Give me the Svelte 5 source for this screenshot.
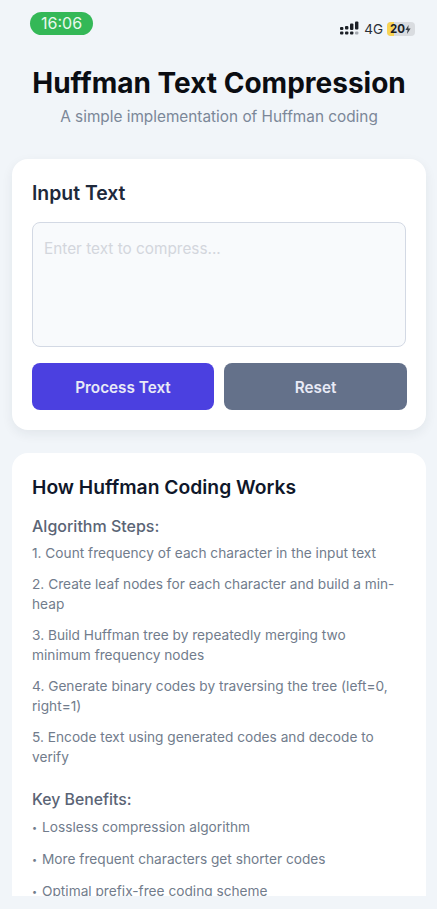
<script>
  const steps = [
    'Count frequency of each character in the input text',
    'Create leaf nodes for each character and build a min-heap',
    'Build Huffman tree by repeatedly merging two minimum frequency nodes',
    'Generate binary codes by traversing the tree (left=0, right=1)',
    'Encode text using generated codes and decode to verify'
  ];
  const benefits = [
    'Lossless compression algorithm',
    'More frequent characters get shorter codes',
    'Optimal prefix-free coding scheme'
  ];
</script>

<div class="screen">
  <div class="status">
    <span class="time">16:06</span>
    <div class="indicators">
      <svg class="signal" width="20" height="14" viewBox="0 0 20 14" aria-hidden="true">
        <g fill="#1b1f26">
          <rect x="0" y="6" width="3.4" height="3" rx="1"/><rect x="5" y="5" width="3.4" height="3.6" rx="1"/>
          <rect x="10" y="2.5" width="3.4" height="6.5" rx="1"/><rect x="15" y="0.5" width="3.4" height="8" rx="1"/>
          <rect x="0" y="10.5" width="3.4" height="3" rx="1"/><rect x="5" y="10.5" width="3.4" height="3" rx="1"/>
          <rect x="10" y="10.5" width="3.4" height="3" rx="1"/><rect x="15" y="10.5" width="3.4" height="3" rx="1" fill="#a4a9b0"/>
        </g>
      </svg>
      <span class="net">4G</span>
      <span class="battery">
        <span class="level"></span>
        <span class="pct">20</span>
        <svg class="bolt" width="6" height="9" viewBox="0 0 6 9" aria-hidden="true">
          <path d="M3.6 0 0.4 5H2.6L2 9 5.6 3.6H3.3Z" fill="#3a3f47"/>
        </svg>
      </span>
    </div>
  </div>

  <header>
    <h1>Huffman Text Compression</h1>
    <p>A simple implementation of Huffman coding</p>
  </header>

  <section class="card input-card">
    <h2>Input Text</h2>
    <textarea placeholder="Enter text to compress..."></textarea>
    <div class="actions">
      <button class="primary">Process Text</button>
      <button class="secondary">Reset</button>
    </div>
  </section>

  <section class="card info-card">
    <h2 class="info-title">How Huffman Coding Works</h2>
    <h3>Algorithm Steps:</h3>
    {#each steps as step, i}
      <p class="line">{i + 1}. {step}</p>
    {/each}
    <h3 class="second">Key Benefits:</h3>
    {#each benefits as b}
      <p class="line"><span class="dot">•</span>{b}</p>
    {/each}
  </section>
</div>

<style>
  :global(body) { margin: 0; background: #fff; }
  .screen {
    width: 437px;
    height: 909px;
    background: #f1f5f9;
    overflow: hidden;
    box-sizing: border-box;
    padding: 12px 11px 13px 12px;
    font-family: Inter, "Liberation Sans", sans-serif;
    display: flex;
    flex-direction: column;
  }
  .status { display: flex; justify-content: space-between; align-items: flex-start; height: 46px; padding: 0 11px 0 18px; flex: none; }
  .time { background: #34b857; color: #e9f8ee; font-size: 16px; line-height: 23px; border-radius: 12px; padding: 0 11px; width: 41px; text-align: center; }
  .indicators { display: flex; align-items: center; gap: 4px; margin-top: 9px; }
  .signal { margin-top: -2px; }
  .net { font-size: 13.5px; color: #2a2f36; }
  .battery { position: relative; width: 28px; height: 14px; background: #d9dce0; border-radius: 4px; overflow: hidden; display: flex; align-items: center; padding-left: 3px; box-sizing: border-box; gap: 0; }
  .level { position: absolute; left: 0; top: 0; bottom: 0; width: 7px; background: #f7d354; }
  .pct { position: relative; font-size: 11.5px; font-weight: 700; line-height: 14px; color: #1b1f26; white-space: nowrap; }
  .bolt { position: relative; flex: none; }
  header { text-align: center; flex: none; height: 101px; }
  h1 { margin: 8px 0 0; font-size: 28px; line-height: 34px; font-weight: 700; color: #0b0d12; white-space: nowrap; }
  header p { margin: 6px 0 0; font-size: 15.35px; line-height: 22px; color: #7b8798; }
  .card { background: #fff; border-radius: 16px; box-sizing: border-box; padding: 20px; flex: none; }
  .input-card { box-shadow: 0 4px 12px rgba(30, 41, 59, 0.07); height: 271px; margin-bottom: 23px; }
  h2 { margin: 0 0 15px; font-size: 19.4px; line-height: 28px; font-weight: 600; color: #1e293b; }
  textarea {
    display: block; width: 100%; height: 125px; box-sizing: border-box; background: #f8fafc;
    border: 1px solid #d3d9e4; border-radius: 8px; padding: 16px 11px; font: 15.35px/20px Inter, sans-serif; resize: none; margin-bottom: 16px;
  }
  textarea::placeholder { color: #d3d6dc; }
  .actions { display: flex; gap: 10px; margin-right: -1px; }
  button { height: 47px; border: 0; border-radius: 8px; padding: 1px 0 0; color: #e8eaf6; font: 600 15.3px Inter, sans-serif; }
  .primary { width: 182px; flex: none; background: #4b40e0; }
  .secondary { flex: 1; background: #64718a; }
  .info-card { border-radius: 16px 16px 0 0; flex: 1; min-height: 0; margin-bottom: 0; overflow: hidden; padding-top: 20px; }
  .info-title { color: #0f172a; margin-bottom: 13px; font-size: 19.3px; }
  h3 { margin: 0 0 5px; font-size: 16px; line-height: 24px; font-weight: 500; color: #5a6475; }
  .second { margin-top: 21px; margin-bottom: 5px; font-size: 15.8px; }
  .line { margin: 0 0 11px; font-size: 13.7px; line-height: 20px; color: #717c8c; }
  .dot { display: inline-block; width: 10px; font-size: 9px; vertical-align: 1px; }
</style>
